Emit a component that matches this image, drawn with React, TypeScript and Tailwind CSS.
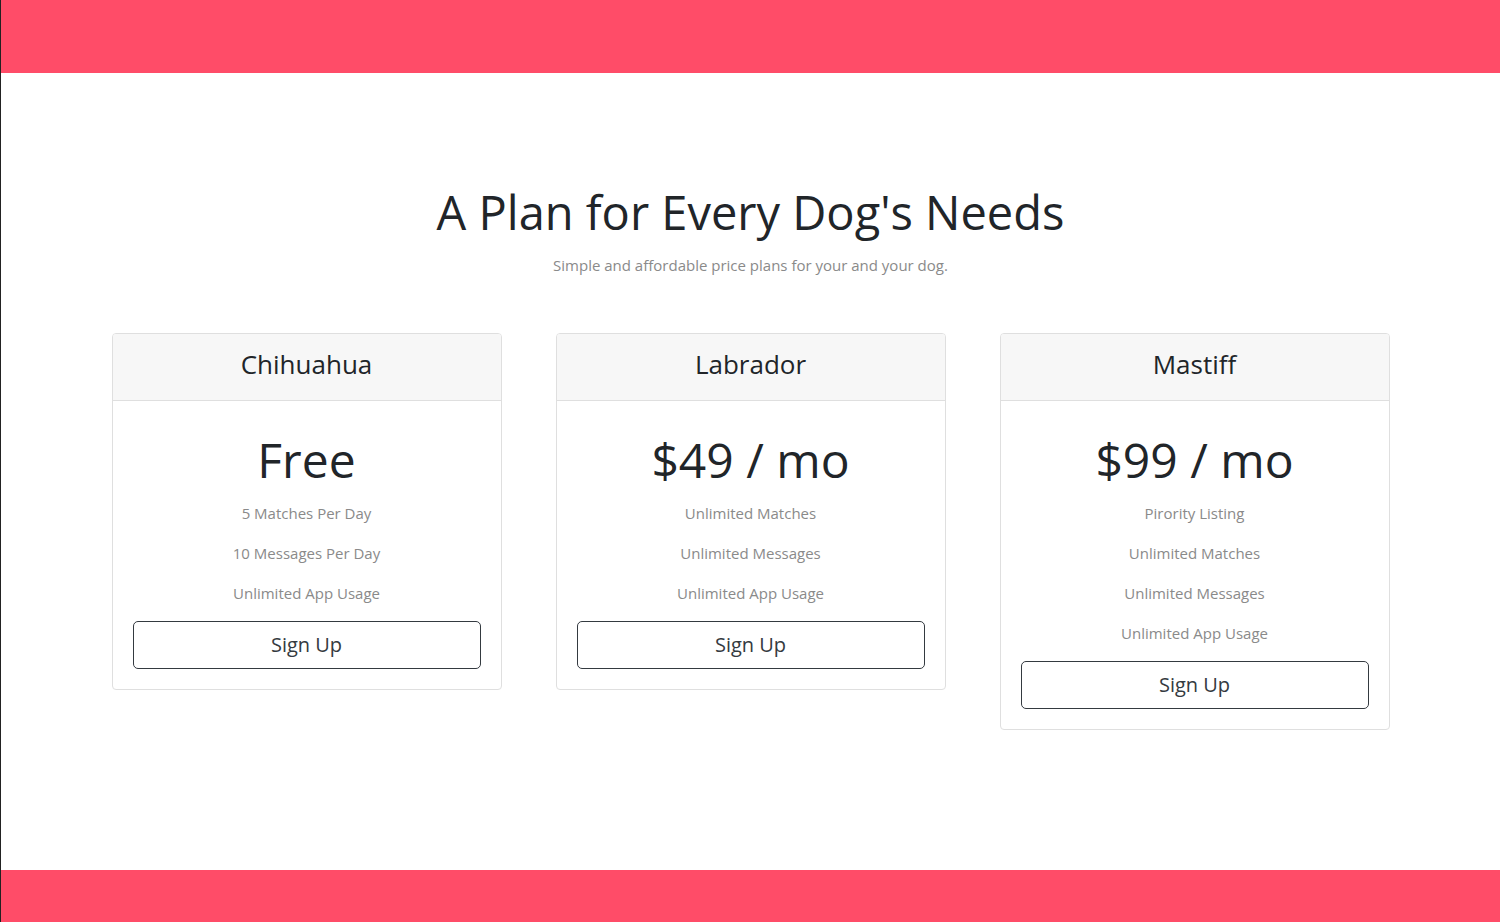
const plans = [
  {
    name: 'Chihuahua',
    price: 'Free',
    features: ['5 Matches Per Day', '10 Messages Per Day', 'Unlimited App Usage'],
  },
  {
    name: 'Labrador',
    price: '$49 / mo',
    features: ['Unlimited Matches', 'Unlimited Messages', 'Unlimited App Usage'],
  },
  {
    name: 'Mastiff',
    price: '$99 / mo',
    features: ['Pirority Listing', 'Unlimited Matches', 'Unlimited Messages', 'Unlimited App Usage'],
  },
];

const App = () => {
  return (
    <div className="min-h-screen border-l border-[#222] bg-white font-['Open_Sans','Noto_Sans',sans-serif] text-[#212529]">
      <div className="h-[73px] bg-[#ff4c68]" />

      <section className="pt-[111px] pb-[140px] text-center">
        <h2 className="text-[47px] leading-[56px] font-normal">A Plan for Every Dog's Needs</h2>
        <p className="mt-[13px] text-[15px] leading-6 text-[#8a8a8a]">
          Simple and affordable price plans for your and your dog.
        </p>

        <div className="mt-[56px] flex items-start justify-center gap-[54px]">
          {plans.map((plan) => (
            <div key={plan.name} className="w-[390px] overflow-hidden rounded-[4px] border border-[#dfdfdf]">
              <div className="flex h-[67px] items-center justify-center border-b border-[#dfdfdf] bg-[#f7f7f7] pb-[6px]">
                <h4 className="text-[26px] font-medium">{plan.name}</h4>
              </div>
              <div className="px-5 pt-[30px] pb-5">
                <h1 className="text-[48px] leading-[58px] font-normal">{plan.price}</h1>
                <ul className="mt-3 space-y-4">
                  {plan.features.map((feature) => (
                    <li key={feature} className="text-[15px] leading-6 text-[#8a8a8a]">
                      {feature}
                    </li>
                  ))}
                </ul>
                <button className="mt-4 h-12 w-full rounded-[5px] border border-[#343a40] text-[20px] text-[#343a40]">
                  Sign Up
                </button>
              </div>
            </div>
          ))}
        </div>
      </section>

      <div className="h-[52px] bg-[#ff4c68]" />
    </div>
  );
};

export default App;
